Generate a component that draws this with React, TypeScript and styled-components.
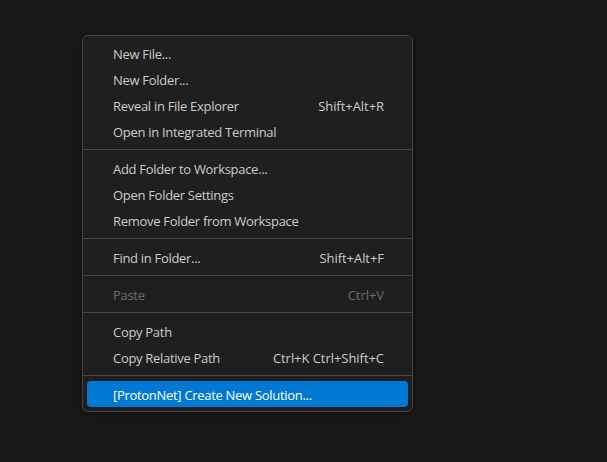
import React from "react";
import styled, { createGlobalStyle } from "styled-components";

const Global = createGlobalStyle`
  html, body {
    margin: 0;
    padding: 0;
    background: #181818;
    width: 607px;
    height: 462px;
    overflow: hidden;
  }
  body {
    font-family: "Open Sans", "Noto Sans", sans-serif;
  }
`;

const Page = styled.div`
  width: 607px;
  height: 462px;
  padding: 35px 0 0 82px;
  box-sizing: border-box;
`;

const Menu = styled.div`
  width: 331px;
  box-sizing: border-box;
  background: #1f1f1f;
  border: 1px solid #454545;
  border-radius: 6px;
  padding: 4px;
  display: flex;
  flex-direction: column;
  box-shadow: 0 2px 8px rgba(0, 0, 0, 0.36);
`;

const Item = styled.div<{ $active?: boolean; $disabled?: boolean }>`
  height: 26px;
  box-sizing: border-box;
  display: flex;
  align-items: center;
  justify-content: space-between;
  padding: 1px 24px 0 26px;
  border-radius: 4px;
  font-size: 13px;
  color: ${(p) => (p.$active ? "#ffffff" : p.$disabled ? "#6b6b6b" : "#cccccc")};
  background: ${(p) => (p.$active ? "#0078d4" : "transparent")};
  white-space: nowrap;
`;

const Label = styled.span`
  letter-spacing: -0.3px;
`;

const Keys = styled.span`
  margin-left: 20px;
  letter-spacing: -0.05px;
`;

const Separator = styled.div`
  height: 1px;
  background: #454545;
  margin: 5px -4px;
`;

type Entry = { label: string; keys?: string; disabled?: boolean; active?: boolean } | "sep";

const entries: Entry[] = [
  { label: "New File..." },
  { label: "New Folder..." },
  { label: "Reveal in File Explorer", keys: "Shift+Alt+R" },
  { label: "Open in Integrated Terminal" },
  "sep",
  { label: "Add Folder to Workspace..." },
  { label: "Open Folder Settings" },
  { label: "Remove Folder from Workspace" },
  "sep",
  { label: "Find in Folder...", keys: "Shift+Alt+F" },
  "sep",
  { label: "Paste", keys: "Ctrl+V", disabled: true },
  "sep",
  { label: "Copy Path" },
  { label: "Copy Relative Path", keys: "Ctrl+K Ctrl+Shift+C" },
  "sep",
  { label: "[ProtonNet] Create New Solution...", active: true },
];

export default function App() {
  return (
    <>
      <Global />
      <Page>
        <Menu>
          {entries.map((e, i) =>
            e === "sep" ? (
              <Separator key={i} />
            ) : (
              <Item key={i} $active={e.active} $disabled={e.disabled}>
                <Label>{e.label}</Label>
                {e.keys && <Keys>{e.keys}</Keys>}
              </Item>
            )
          )}
        </Menu>
      </Page>
    </>
  );
}
